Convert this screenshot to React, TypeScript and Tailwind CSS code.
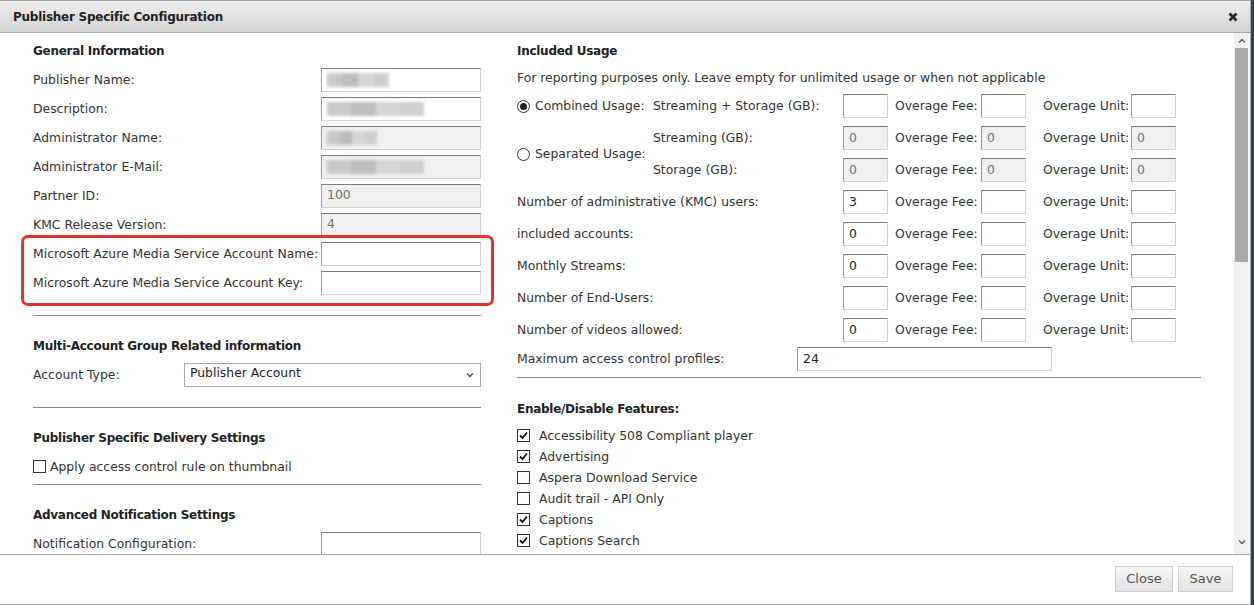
import React from 'react';

const font = { fontFamily: '"DejaVu Sans", Verdana, sans-serif' };

function Field({ value, disabled, blur, className = '' }: { value?: string; disabled?: boolean; blur?: number; className?: string }) {
  return (
    <div
      className={`relative h-[24px] border border-t-[#7a7a7a] border-l-[#9a9a9a] border-r-[#d4d4d4] border-b-[#d4d4d4] flex items-center px-[5px] text-[12.4px] ${
        disabled ? 'bg-[#f0f0f0] text-[#6f6f6f]' : 'bg-white text-[#222]'
      } ${className}`}
    >
      {blur ? (
        <div className="flex h-[14px] blur-[1.5px]" style={{ width: blur }}>
          <div className="flex-1 bg-[#c9c9c9]" />
          <div className="flex-1 bg-[#bdbdbd]" />
          <div className="flex-1 bg-[#d6d6d6]" />
          <div className="flex-1 bg-[#cfcfcf]" />
        </div>
      ) : (
        value
      )}
    </div>
  );
}

function LeftRow({ label, children }: { label: string; children: React.ReactNode }) {
  return (
    <div className="h-[29px] flex items-center justify-between">
      <span className="whitespace-nowrap pt-[1px]">{label}</span>
      <div className="w-[160px] shrink-0">{children}</div>
    </div>
  );
}

function Heading({ children }: { children: React.ReactNode }) {
  return (
    <div className="h-[29px] flex items-center font-bold text-[12px] tracking-[-0.28px] text-[#222]">{children}</div>
  );
}

function Overage({ value, disabled }: { value?: string; disabled?: boolean }) {
  return (
    <>
      <Field value={value} disabled={disabled} className="w-[45px] shrink-0" />
      <span className="w-[93px] shrink-0 pl-[7px] whitespace-nowrap">Overage Fee:</span>
      <Field value={disabled ? '0' : ''} disabled={disabled} className="w-[45px] shrink-0" />
      <span className="w-[105px] shrink-0 pl-[17px] whitespace-nowrap">Overage Unit:</span>
      <Field value={disabled ? '0' : ''} disabled={disabled} className="w-[45px] shrink-0" />
    </>
  );
}

function Radio({ checked }: { checked?: boolean }) {
  return (
    <span className="w-[13px] h-[13px] rounded-full border border-[#333] bg-white flex items-center justify-center mr-[5px] shrink-0">
      {checked && <span className="w-[7px] h-[7px] rounded-full bg-[#222]" />}
    </span>
  );
}

function Check({ checked }: { checked?: boolean }) {
  return (
    <span className="w-[13px] h-[13px] border border-[#333] bg-white flex items-center justify-center shrink-0">
      {checked && (
        <svg width="9" height="9" viewBox="0 0 9 9">
          <path d="M1 4.5 L3.5 7 L8 1.5" fill="none" stroke="#111" strokeWidth="1.8" />
        </svg>
      )}
    </span>
  );
}

const features: [string, boolean][] = [
  ['Accessibility 508 Compliant player', true],
  ['Advertising', true],
  ['Aspera Download Service', false],
  ['Audit trail - API Only', false],
  ['Captions', true],
  ['Captions Search', true],
];

const usageRows: [string, string][] = [
  ['Number of administrative (KMC) users:', '3'],
  ['included accounts:', '0'],
  ['Monthly Streams:', '0'],
  ['Number of End-Users:', ''],
  ['Number of videos allowed:', '0'],
];

export default function App() {
  return (
    <div className="w-[1254px] h-[605px] bg-[#2f4256] text-[12.4px] text-[#333]" style={font}>
      <div className="w-[1251px] h-[605px] bg-white border-t border-r border-b border-[#a8a8a8] flex flex-col">
        {/* title bar */}
        <div className="h-[32px] shrink-0 bg-gradient-to-b from-[#efefef] to-[#d3d3d3] border-b border-[#a8a8a8] flex items-center justify-between pl-[13px] pr-[12px]">
          <span className="font-bold text-[12px] tracking-[-0.25px] text-[#222]">Publisher Specific Configuration</span>
          <svg width="10" height="10" viewBox="0 0 10 10">
            <path d="M1.5 1.5 L8.5 8.5 M8.5 1.5 L1.5 8.5" stroke="#222" strokeWidth="2.6" />
          </svg>
        </div>

        {/* body */}
        <div className="h-[521px] shrink-0 flex">
          <div className="flex-1 overflow-hidden relative pl-[33px] pt-[3px] flex">
            {/* left column */}
            <div className="w-[448px] shrink-0">
              <Heading>General Information</Heading>
              <LeftRow label="Publisher Name:">
                <Field blur={62} />
              </LeftRow>
              <LeftRow label="Description:">
                <Field blur={97} />
              </LeftRow>
              <LeftRow label="Administrator Name:">
                <Field blur={50} disabled />
              </LeftRow>
              <LeftRow label="Administrator E-Mail:">
                <Field blur={97} disabled />
              </LeftRow>
              <LeftRow label="Partner ID:">
                <Field value="100" disabled />
              </LeftRow>
              <LeftRow label="KMC Release Version:">
                <Field value="4" disabled />
              </LeftRow>
              <LeftRow label="Microsoft Azure Media Service Account Name:">
                <Field />
              </LeftRow>
              <LeftRow label="Microsoft Azure Media Service Account Key:">
                <Field />
              </LeftRow>

              <div className="mt-[18px] border-t border-[#8a8a8a] pt-[15px]">
                <Heading>Multi-Account Group Related information</Heading>
                <div className="h-[29px] flex items-center justify-between">
                  <span className="pt-[1px]">Account Type:</span>
                  <div className="w-[297px] h-[24px] border border-[#a9a9a9] flex items-center justify-between pl-[5px] pr-[6px] text-[#222]">
                    <span className="-mt-[2px]">Publisher Account</span>
                    <svg width="8" height="6" viewBox="0 0 8 6">
                      <path d="M1 1.5 L4 4.5 L7 1.5" fill="none" stroke="#555" strokeWidth="1.5" />
                    </svg>
                  </div>
                </div>
              </div>

              <div className="mt-[18px] border-t border-[#8a8a8a] pt-[15px]">
                <Heading>Publisher Specific Delivery Settings</Heading>
                <div className="h-[29px] flex items-center gap-[4px]">
                  <Check />
                  <span className="pt-[1px]">Apply access control rule on thumbnail</span>
                </div>
              </div>

              <div className="mt-[3px] border-t border-[#8a8a8a] pt-[15px]">
                <Heading>Advanced Notification Settings</Heading>
                <LeftRow label="Notification Configuration:">
                  <Field />
                </LeftRow>
              </div>
            </div>

            {/* right column */}
            <div className="w-[684px] ml-[36px] shrink-0">
              <Heading>Included Usage</Heading>
              <div className="h-[25px] flex items-center whitespace-nowrap pt-[2px]">
                For reporting purposes only. Leave empty for unlimited usage or when not applicable
              </div>

              <div className="flex">
                <div className="w-[136px] shrink-0 flex flex-col">
                  <div className="h-[32px] flex items-center whitespace-nowrap">
                    <Radio checked />
                    <span>Combined Usage:</span>
                  </div>
                  <div className="h-[64px] flex items-center whitespace-nowrap">
                    <Radio />
                    <span>Separated Usage:</span>
                  </div>
                </div>
                <div className="flex flex-col">
                  <div className="h-[32px] flex items-center">
                    <span className="w-[190px] shrink-0 whitespace-nowrap">Streaming + Storage (GB):</span>
                    <Overage />
                  </div>
                  <div className="h-[32px] flex items-center">
                    <span className="w-[190px] shrink-0">Streaming (GB):</span>
                    <Overage value="0" disabled />
                  </div>
                  <div className="h-[32px] flex items-center">
                    <span className="w-[190px] shrink-0">Storage (GB):</span>
                    <Overage value="0" disabled />
                  </div>
                </div>
              </div>

              {usageRows.map(([label, v]) => (
                <div key={label} className="h-[32px] flex items-center">
                  <span className="w-[326px] shrink-0 whitespace-nowrap">{label}</span>
                  <Overage value={v} />
                </div>
              ))}

              <div className="h-[26px] flex items-center">
                <span className="w-[280px] shrink-0 whitespace-nowrap">Maximum access control profiles:</span>
                <Field value="24" className="w-[255px]" />
              </div>

              <div className="mt-[5px] border-t border-[#8a8a8a] pt-[16px]">
                <Heading>Enable/Disable Features:</Heading>
                <div className="mt-[2px]">
                  {features.map(([label, on]) => (
                    <div key={label} className="h-[21px] flex items-center gap-[9px]">
                      <Check checked={on} />
                      <span className="pt-[1px]">{label}</span>
                    </div>
                  ))}
                </div>
              </div>
            </div>

            {/* annotation highlight */}
            <div className="absolute left-[21px] top-[202px] w-[473px] h-[71px] border-[3px] border-[#e0342c] rounded-[7px]" />
          </div>

          {/* scrollbar */}
          <div className="w-[15px] shrink-0 mr-[1px] bg-[#f0f0f0] flex flex-col">
            <div className="h-[15px] flex items-center justify-center">
              <svg width="8" height="6" viewBox="0 0 8 6">
                <path d="M1 4.5 L4 1.5 L7 4.5" fill="none" stroke="#606060" strokeWidth="1.5" />
              </svg>
            </div>
            <div className="h-[214px] bg-[#a8a8a8] mx-[1px]" />
            <div className="flex-1" />
            <div className="h-[15px] flex items-center justify-center mb-[5px]">
              <svg width="8" height="6" viewBox="0 0 8 6">
                <path d="M1 1.5 L4 4.5 L7 1.5" fill="none" stroke="#606060" strokeWidth="1.5" />
              </svg>
            </div>
          </div>
        </div>

        {/* footer */}
        <div className="flex-1 border-t border-[#a8a8a8] flex items-start justify-end gap-[5px] pt-[11px] pr-[17px]">
          <button className="w-[58px] h-[26px] border border-[#cfcfcf] bg-gradient-to-b from-[#f6f6f6] to-[#e2e2e2] text-[#555] text-[13px]">Close</button>
          <button className="w-[55px] h-[26px] border border-[#cfcfcf] bg-gradient-to-b from-[#f6f6f6] to-[#e2e2e2] text-[#555] text-[13px]">Save</button>
        </div>
      </div>
    </div>
  );
}
